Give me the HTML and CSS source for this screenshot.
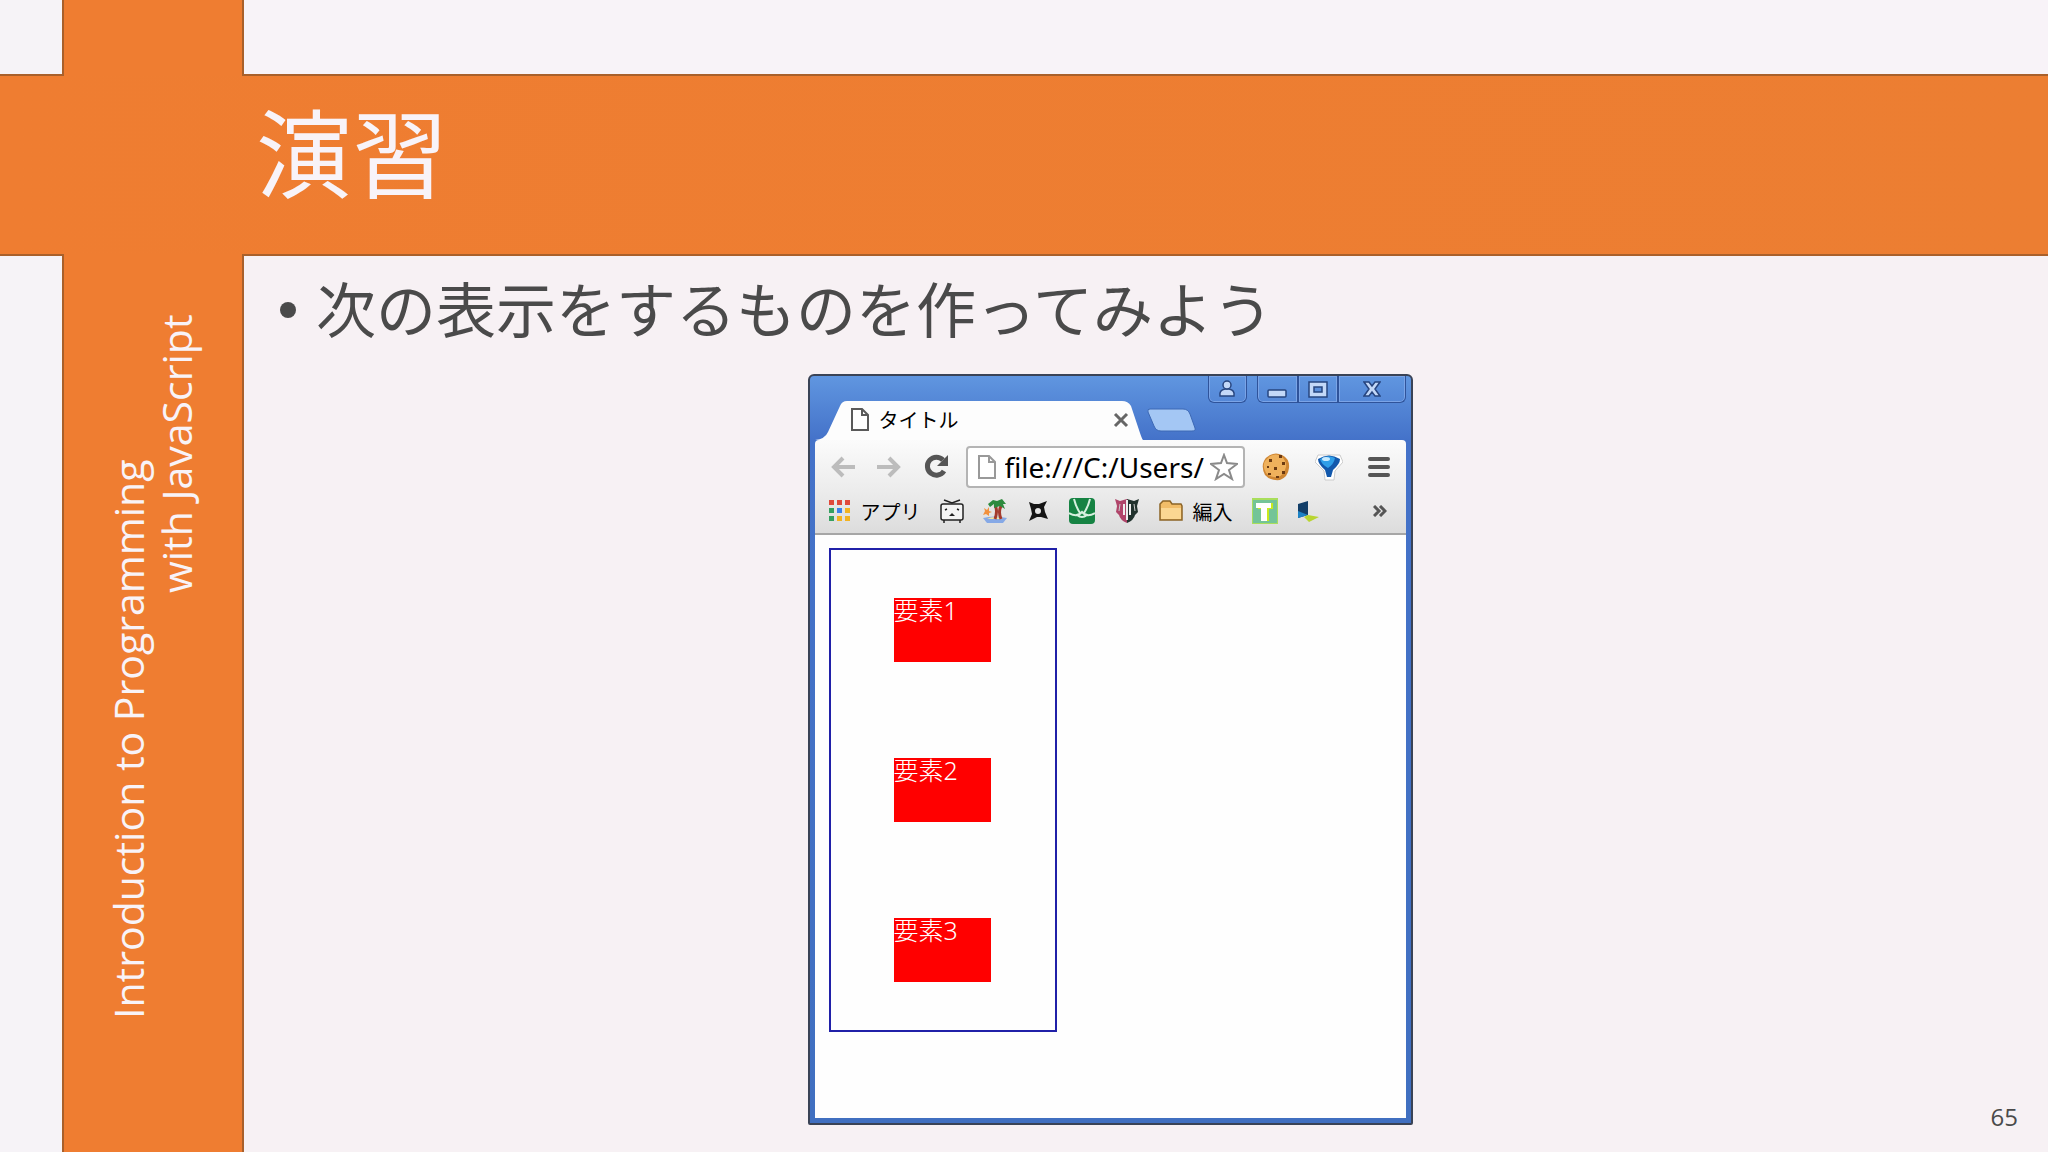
FILE: index.html
```
<!DOCTYPE html>
<html lang="ja">
<head>
    <meta charset="UTF-8">
    <meta name="viewport" content="width=device-width, initial-scale=1.0">
    <title>演習</title>
    <link rel="stylesheet" href="styles.css">
</head>
<body>
    <div class="slide">
        <!-- Top strip -->
        <div class="corner top-left"></div>
        <div class="band"></div>
        <div class="corner top-right"></div>

        <!-- Title band -->
        <header>
            <h1>演習</h1>
        </header>

        <!-- Left strip and course name -->
        <div class="corner bottom-left"></div>
        <aside>
            <p>Introduction to Programming</p>
            <p class="second">with JavaScript</p>
        </aside>

        <!-- Slide body -->
        <main>
            <ul class="points">
                <li>次の表示をするものを作ってみよう</li>
            </ul>

            <div class="window">
                <div class="titlebar">
                    <div class="tab">
                        <svg class="tab-shape" viewBox="0 0 328 39" preserveAspectRatio="none">
                            <path d="M0 39 Q10 38 13 31 L25 5 Q27 0 32 0 H307 Q313 0 316 5 L325 32 Q327 38 328 39 Z" fill="#fdfdfd"/>
                        </svg>
                        <svg class="page-icon" width="18" height="24" viewBox="0 0 18 24">
                            <path d="M1 1 H11 L17 7 V22 H1 Z M11 1 V7 H17" fill="#fff" stroke="#5a5a5a" stroke-width="2"/>
                        </svg>
                        <span>タイトル</span>
                        <button class="tab-close" aria-label="閉じる">
                            <svg width="16" height="16" viewBox="0 0 16 16"><path d="M2 2 L14 14 M14 2 L2 14" stroke="#666" stroke-width="3"/></svg>
                        </button>
                    </div>
                    <button class="new-tab" aria-label="新しいタブ">
                        <svg width="50" height="24" viewBox="0 0 50 24"><path d="M3 1 H36 Q41 1 43 6 L48 20 Q49 23 45 23 H14 Q9 23 7 18 L1 4 Q0 1 3 1 Z" fill="#a4c7f4" stroke="#3c68b4"/></svg>
                    </button>
                    <div class="controls">
                        <button class="user" aria-label="ユーザー">
                            <svg width="18" height="18" viewBox="0 0 18 18" fill="#c3d8f8" stroke="#27457f" stroke-width="1.5"><path d="M2 16 Q1 10 7 9 H11 Q17 10 16 16 Z"/><circle cx="9" cy="5" r="4"/></svg>
                        </button>
                        <button class="min" aria-label="最小化">
                            <svg width="20" height="18" viewBox="0 0 20 18"><rect x="1" y="10" width="18" height="7" rx="1" fill="#c3d8f8" stroke="#27457f" stroke-width="1.5"/></svg>
                        </button>
                        <button class="max" aria-label="最大化">
                            <svg width="20" height="18" viewBox="0 0 20 18"><path d="M1 2 H19 V17 H1 Z M6 7 V12 H14 V7 Z" fill="#c3d8f8" fill-rule="evenodd" stroke="#27457f" stroke-width="1.5"/></svg>
                        </button>
                        <button class="close" aria-label="ウィンドウを閉じる">
                            <svg width="18" height="18" viewBox="0 0 18 18"><path d="M1 2 H6 L9 6 L12 2 H17 L12 9 L17 16 H12 L9 12 L6 16 H1 L6 9 Z" fill="#c3d8f8" stroke="#27457f" stroke-width="1.5"/></svg>
                        </button>
                    </div>
                </div>

                <div class="toolbar">
                    <div class="nav">
                        <button aria-label="戻る">
                            <svg width="24" height="22" viewBox="0 0 24 22"><path d="M12 2 L3 11 L12 20 M3 11 H24" fill="none" stroke="#bcbcbc" stroke-width="4"/></svg>
                        </button>
                        <button aria-label="進む">
                            <svg width="24" height="22" viewBox="0 0 24 22"><path d="M12 2 L21 11 L12 20 M21 11 H0" fill="none" stroke="#bcbcbc" stroke-width="4"/></svg>
                        </button>
                        <button aria-label="再読み込み">
                            <svg width="26" height="26" viewBox="0 0 26 26"><path d="M20 6 A9 9 0 1 0 21 17" fill="none" stroke="#555" stroke-width="5"/><path d="M25 1 V12 H14 Z" fill="#555"/></svg>
                        </button>
                    </div>
                    <div class="address">
                        <svg width="18" height="24" viewBox="0 0 18 24">
                            <path d="M1 1 H11 L17 7 V23 H1 Z M11 1 V7 H17" fill="#fff" stroke="#999" stroke-width="2"/>
                        </svg>
                        <input type="text" aria-label="アドレス" value="file:///C:/Users/">
                        <svg width="28" height="28" viewBox="0 0 28 28"><path d="M14 2 L17 10 L27 11 L19 17 L22 26 L14 21 L6 26 L9 17 L1 11 L11 10 Z" fill="#fff" stroke="#8a8a8a" stroke-width="2"/></svg>
                    </div>
                    <div class="extras">
                        <svg width="28" height="28" viewBox="0 0 28 28"><path d="M8 2 Q14 -1 20 2 Q28 6 27 15 Q26 24 18 27 Q8 28 3 22 Q-1 14 2 8 Q4 4 8 2 Z" fill="#cf8633"/><path d="M8 3 Q14 0 19 3 Q25 8 24 14 Q22 22 16 24 Q8 25 4 20 Q0 13 3 8 Z" fill="#efb15c"/><g fill="#6b3a12"><rect x="7" y="6" width="3" height="3"/><rect x="17" y="2" width="3" height="3"/><rect x="20" y="9" width="3" height="3"/><rect x="12" y="14" width="3" height="3"/><rect x="5" y="13" width="2" height="2"/><rect x="6" y="20" width="3" height="2"/><rect x="20" y="18" width="3" height="3"/><rect x="14" y="23" width="3" height="2"/></g></svg>
                        <svg width="28" height="28" viewBox="0 0 28 28"><path d="M3 2 H25 L28 9 L20 18 L19 27 H10 L9 18 L0 9 Z" fill="#fff" stroke="#ccc"/><path d="M3 6 Q14 -1 25 6 Q25 11 18 17 L16 24 H12 L10 17 Q3 11 3 6 Z" fill="#1258ac"/><path d="M5 6 Q13 1 20 5 Q19 11 13 15 Q6 11 5 6 Z" fill="#2f9ee8"/><ellipse cx="11" cy="6" rx="4" ry="2" fill="#c8eaff"/></svg>
                        <button aria-label="メニュー">
                            <svg width="22" height="22" viewBox="0 0 22 22"><path d="M2 3 H20 M2 11 H20 M2 19 H20" stroke="#555" stroke-width="4" stroke-linecap="round"/></svg>
                        </button>
                    </div>
                </div>

                <div class="bookmarks">
                    <a href="#">
                        <svg width="22" height="22" viewBox="0 0 22 22"><path d="M0 0h5v5H0zM8 0h5v5H8zM16 0h5v5h-5z" fill="#e04a3c"/><path d="M0 8h5v5H0zM0 16h5v5H0z" fill="#35a060"/><path d="M8 8h5v5H8z" fill="#3b82ec"/><path d="M16 8h5v5h-5zM8 16h5v5H8zM16 16h5v5h-5z" fill="#f3b322"/></svg>
                        アプリ
                    </a>
                    <svg width="24" height="24" viewBox="0 0 24 24"><path d="M3 5 H21 Q23 5 23 7 V19 Q23 21 21 21 H3 Q1 21 1 19 V7 Q1 5 3 5 Z" fill="#f4f4f4" stroke="#222" stroke-width="1.5"/><path d="M4 21 V24 M20 21 V24 M4 1 L12 4 L20 1 M5 11 L7 10 M17 10 L19 11" fill="none" stroke="#222" stroke-width="1.5"/><path d="M9 17 L12 14 L15 17 Z" fill="#222"/></svg>
                    <svg width="24" height="24" viewBox="0 0 24 24"><path d="M0 19 Q11 16 24 19 L20 24 H4 Z" fill="#86a9e6"/><path d="M4 20 Q12 16 20 20 Z" fill="#f3e7a0"/><path d="M12 20 Q15 12 12 6 M18 20 Q15 13 18 7" stroke="#a33b2c" stroke-width="3" fill="none"/><path d="M5 5 L10 1 L14 2 L19 0 L23 5 L20 5 L22 10 L17 7 L11 9 L11 5 L7 8 Z" fill="#2d8a3e"/><path d="M1 9 L4 11 L6 8 V12 L9 13 L6 14 L6 17 L3 15 L0 16 L2 12 Z" fill="#f2913d"/></svg>
                    <svg width="24" height="24" viewBox="0 0 24 24"><path d="M3 3 L8 5 H13 L21 2 L18 8 L19 13 L22 20 L15 18 H11 L3 22 L6 15 L5 10 Z M12 9 A3 3 0 1 0 12 15 A3 3 0 1 0 12 9" fill="#151515" fill-rule="evenodd"/></svg>
                    <svg width="26" height="26" viewBox="0 0 26 26"><rect width="26" height="26" rx="4" fill="#168343"/><path d="M5 1 Q7 9 11 15 M21 1 Q19 9 15 15 M0 15 Q8 20 13 14 Q18 20 26 15 M8 17 Q13 21 18 17" fill="none" stroke="#d7f0df" stroke-width="2"/></svg>
                    <svg width="26" height="26" viewBox="0 0 26 26"><path d="M1 1 L6 3 L13 1 V25 Q6 22 5 17 L2 14 L3 8 Z" fill="#b0456a"/><path d="M25 1 L20 3 L13 1 V25 Q20 22 21 17 L24 14 L23 8 Z" fill="#21322d"/><path d="M10 6 V17 M16 6 V17 M13 2 V22" fill="none" stroke="#eee" stroke-width="2"/><path d="M6 6 L5 13 M20 6 L21 13" stroke="#ccc"/></svg>
                    <a href="#">
                        <svg width="24" height="22" viewBox="0 0 24 22"><path d="M1 20 V4 L4 1 H11 L13 4 H22 L23 6 V20 Z" fill="#f2bd68" stroke="#8c6426" stroke-width="1.5"/><path d="M2 8 H22 V19 H2 Z" fill="#fbd792"/></svg>
                        編入
                    </a>
                    <svg width="26" height="26" viewBox="0 0 26 26"><rect width="26" height="26" fill="#a9de5c"/><rect x="1" y="2" width="24" height="23" fill="#74c498"/><path d="M6 5 H21 V11 H17 V23 H11 V11 H6 Z" fill="#c9ea1c"/><path d="M4 5 H19 V10 H15 V23 H9 V10 H4 Z" fill="#fff"/></svg>
                    <svg width="22" height="22" viewBox="0 0 22 22"><path d="M1 4 L11 1 V15 L1 18 Z" fill="#123e68"/><path d="M1 11 L11 15 L1 18 Z" fill="#1c83c6"/><path d="M11 15 L22 17 L12 22 L7 17 Z" fill="#b9d531"/></svg>
                    <button class="more" aria-label="その他のブックマーク">
                        <svg width="14" height="12" viewBox="0 0 14 12"><path d="M1 1 L6 6 L1 11 M7 1 L12 6 L7 11" fill="none" stroke="#555" stroke-width="3"/></svg>
                    </button>
                </div>

                <div class="page">
                    <div class="box">
                        <div class="item">要素1</div>
                        <div class="item">要素2</div>
                        <div class="item">要素3</div>
                    </div>
                </div>
            </div>

            <footer>65</footer>
        </main>
    </div>
</body>
</html>
```
FILE: styles.css
```
* {
    box-sizing: border-box;
}

body {
    margin: 0;
    font-family: "Noto Sans", "Noto Sans CJK JP", sans-serif;
    background-color: #f7f1f4;
    color: #4a4a4a;
}

button {
    display: flex;
    align-items: center;
    justify-content: center;
    margin: 0;
    padding: 0;
    border: 0;
    background: none;
}

svg {
    display: block;
    flex: none;
}

/* Slide frame */
.slide {
    display: grid;
    grid-template-columns: 64px 178px 1fr;
    grid-template-rows: 76px 178px 1fr;
    min-height: 100vh;
    background-color: #ef7d31;
}

.corner {
    background-color: #f6f3f7;
    border: 0 solid #a9602b;
}

.top-left {
    border-width: 0 2px 2px 0;
}

.top-right {
    background-color: #f8f3f8;
    border-width: 0 0 2px 2px;
}

.bottom-left {
    border-width: 2px 2px 0 0;
}

/* Title */
header {
    grid-column: 1 / 4;
    display: flex;
    align-items: center;
    padding: 0 0 24px 256px;
    background-image: linear-gradient(90deg, #ef7d31, #ec7e32);
}

h1 {
    margin: 0;
    font-size: 96px;
    line-height: 120px;
    font-weight: 400;
    color: #f8f3f8;
}

/* Course name, read from bottom to top */
aside {
    writing-mode: vertical-rl;
    transform: rotate(180deg);
    padding: 134px 40px 60px 0;
    font-family: "Open Sans", sans-serif;
    font-size: 41px;
    line-height: 48px;
    color: #f8f3f8;
}

aside p {
    margin: 0;
}

aside .second {
    text-align: right;
}

/* Slide body */
main {
    display: flex;
    flex-direction: column;
    border: 0 solid #a9602b;
    border-width: 2px 0 0 2px;
    padding: 12px 30px 20px 36px;
    background-color: #f7f1f4;
}

.points {
    margin: 0;
    padding: 0;
    list-style: none;
    font-size: 60px;
    line-height: 84px;
}

.points li {
    display: flex;
    align-items: center;
    gap: 20px;
}

.points li::before {
    content: "";
    width: 16px;
    height: 16px;
    border-radius: 50%;
    background-color: #4a4a4a;
}

footer {
    align-self: flex-end;
    margin-top: -24px;
    font-family: "Open Sans", sans-serif;
    font-size: 24px;
    line-height: 32px;
}

/* Browser window */
.window {
    align-self: center;
    width: 605px;
    margin: 22px 78px 0 0;
    border: 2px solid #3a4356;
    border-radius: 6px 6px 2px 2px;
    padding: 0 5px 5px;
    background: linear-gradient(#6096e0, #4472c9 64px, #406fc0);
    font-size: 20px;
    color: #000;
}

.titlebar {
    display: flex;
    align-items: flex-start;
    height: 64px;
}

.tab {
    position: relative;
    display: flex;
    align-items: center;
    width: 328px;
    height: 39px;
    margin-top: 25px;
    padding: 0 14px 2px 36px;
}

.tab-shape {
    position: absolute;
    inset: 0;
    width: 100%;
    height: 100%;
}

.tab span,
.tab .page-icon,
.tab-close {
    position: relative;
}

.tab span {
    margin-left: 10px;
}

.tab-close {
    margin-left: auto;
}

.new-tab {
    margin-top: 32px;
    margin-left: 4px;
}

.controls {
    display: flex;
    margin-left: auto;
}

.controls button {
    height: 27px;
    border: 1px solid #2f539a;
    border-top: 0;
    box-shadow: inset 0 0 0 1px #7ba4e6;
}

.controls .user {
    width: 39px;
    margin-right: 10px;
    border-radius: 0 0 6px 6px;
}

.controls .min {
    width: 41px;
    border-radius: 0 0 0 6px;
}

.controls .max {
    width: 40px;
}

.controls .close {
    width: 68px;
    border-radius: 0 0 6px 0;
}

.toolbar {
    display: flex;
    align-items: center;
    height: 54px;
    padding: 0 16px;
    gap: 17px;
    border-radius: 4px 4px 0 0;
    background: linear-gradient(#fbfbfb, #ebebeb);
}

.nav {
    display: flex;
    align-items: center;
    gap: 22px;
}

.extras {
    display: flex;
    align-items: center;
    gap: 25px;
}

.address {
    display: flex;
    align-items: center;
    flex: 1;
    min-width: 0;
    height: 42px;
    padding: 0 5px 0 10px;
    border: 2px solid #b4b4b4;
    border-radius: 4px;
    background-color: #fff;
}

.address input {
    flex: 1;
    min-width: 0;
    margin: 0;
    padding: 0 0 0 9px;
    border: 0;
    background: none;
    font-family: "Noto Sans", sans-serif;
    font-size: 28px;
    color: #000;
}

.bookmarks {
    display: flex;
    align-items: center;
    gap: 19px;
    height: 41px;
    padding: 0 19px 5px 14px;
    border-bottom: 2px solid #a6a6a6;
    background: linear-gradient(#ebebeb, #dcdcdc);
}

.bookmarks a {
    display: flex;
    align-items: center;
    gap: 10px;
    color: #000;
    text-decoration: none;
}

.more {
    margin-left: auto;
}

/* Page shown in the browser */
.page {
    padding: 13px 14px 86px;
    background-color: #fefefe;
}

.box {
    display: flex;
    flex-direction: column;
    gap: 96px;
    width: 228px;
    padding: 48px 63px;
    border: 2px solid #2020a8;
}

.item {
    width: 97px;
    height: 64px;
    background-color: #f00;
    font-size: 25px;
    font-weight: 300;
    line-height: 24px;
    color: #fff;
}
```
